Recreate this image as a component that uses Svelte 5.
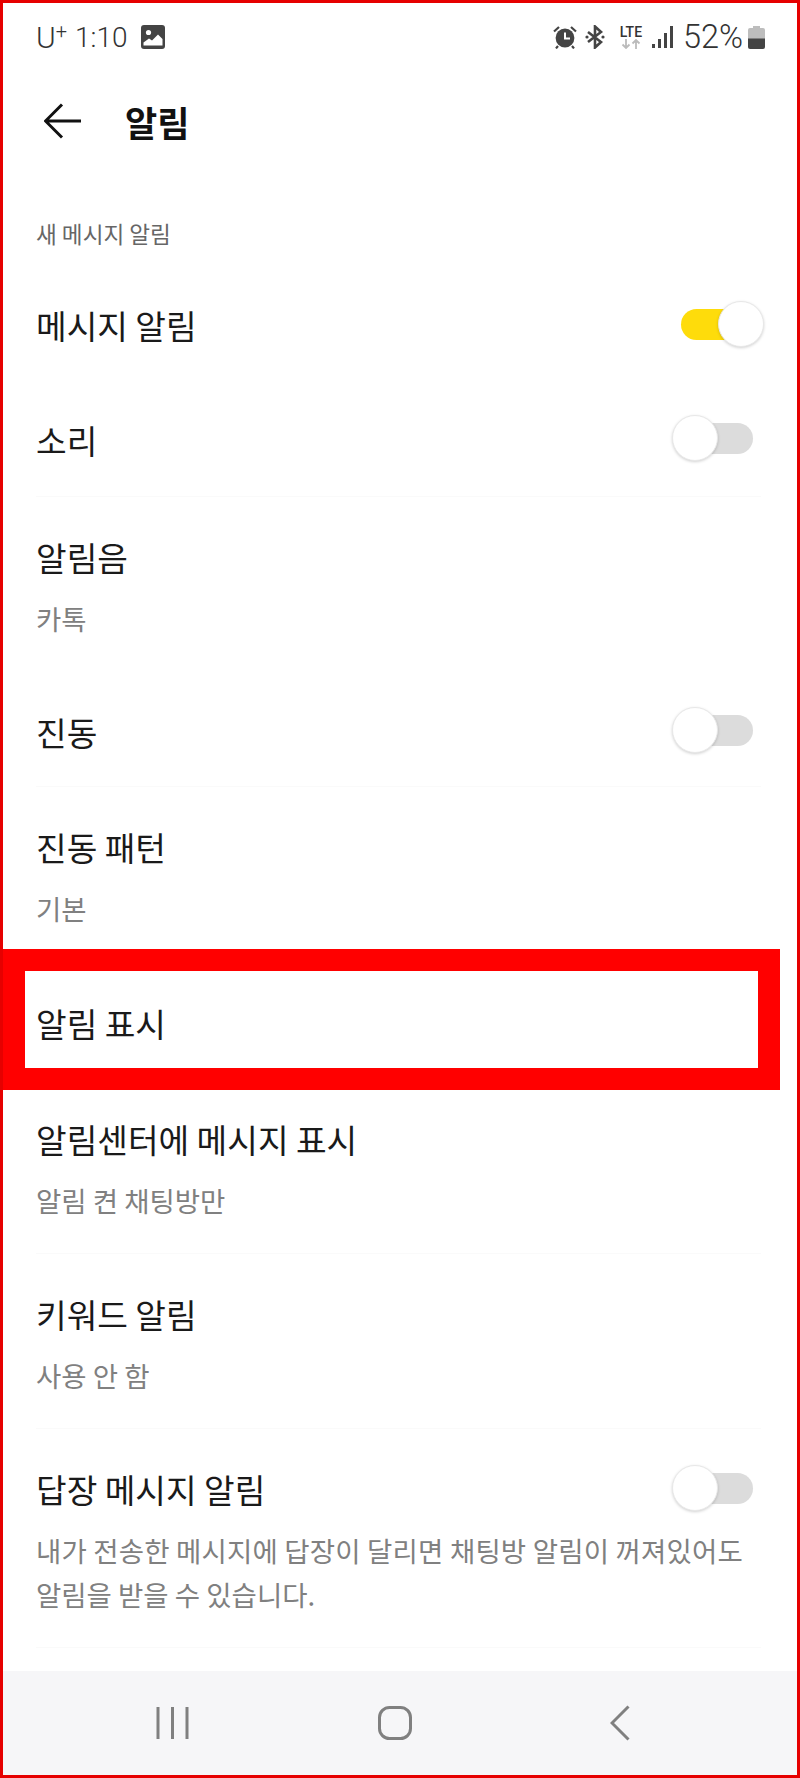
<script>
    let rows = [
        { kind: "toggle", title: "메시지 알림", on: true, h: 116 },
        { kind: "toggle", title: "소리", on: false, h: 114, line: true },
        { kind: "double", title: "알림음", sub: "카톡", h: 180 },
        { kind: "toggle", title: "진동", on: false, h: 110, line: true },
        { kind: "double", title: "진동 패턴", sub: "기본", h: 180 },
        { kind: "plain", title: "알림 표시", h: 112 },
        { kind: "double", title: "알림센터에 메시지 표시", sub: "알림 켠 채팅방만", h: 175, line: true },
        { kind: "double", title: "키워드 알림", sub: "사용 안 함", h: 175, line: true },
    ];
</script>

<div class="screen">
    <div class="status">
        <div class="status-left">
            <span class="carrier">U<sup>+</sup></span>
            <span>1:10</span>
            <svg class="pic" viewBox="0 0 24 24" width="24" height="24">
                <rect width="24" height="24" rx="3" fill="#444" />
                <circle cx="7.5" cy="7.5" r="2.6" fill="#fff" />
                <path d="M2.5 20.5v-3l5.5-4 3 2 6-6 4.5 4.5v6.5z" fill="#fff" />
            </svg>
        </div>
        <div class="status-right">
            <svg viewBox="0 0 24 24" width="24" height="24" fill="#444">
                <circle cx="12" cy="13" r="9.4" />
                <path d="M12 7.5v6h5" fill="none" stroke="#fff" stroke-width="2" />
                <path d="M1 6.5 6 2M23 6.5 18 2M5 21l-2 2.4M19 21l2 2.4" fill="none" stroke="#444" stroke-width="2.2" />
            </svg>
            <svg class="bt" viewBox="0 0 20 24" width="20" height="24">
                <path d="M3 7l13 10-6 5.500V1.500L16 7 3 17" fill="none" stroke="#444" stroke-width="2.600" />
                <circle cx="2" cy="12" r="1.600" fill="#444" />
                <circle cx="18" cy="12" r="1.600" fill="#444" />
            </svg>
            <div class="lte">
                <span>LTE</span>
                <svg viewBox="0 0 24 10" width="24" height="10">
                    <path d="M7 0v9M3.500 5.500 7 9l3.500-3.500M17 10V1M13.500 4.500 17 1l3.500 3.500" fill="none" stroke="#bbb" stroke-width="1.800" />
                </svg>
            </div>
            <svg viewBox="0 0 21 22" width="21" height="22" fill="#444">
                <rect x="0" y="18" width="3" height="4" />
                <rect x="6" y="13" width="3" height="9" />
                <rect x="12" y="7" width="3" height="15" />
                <rect x="18" y="0" width="3" height="22" />
            </svg>
            <span class="pct">52%</span>
            <svg class="batt" viewBox="0 0 17 23" width="17" height="23">
                <path d="M5 0h7v2h3a2 2 0 0 1 2 2v10H0V4a2 2 0 0 1 2-2h3z" fill="#bdbdbd" />
                <path d="M0 12.500h17V21a2 2 0 0 1-2 2H2a2 2 0 0 1-2-2z" fill="#444" />
            </svg>
        </div>
    </div>

    <div class="header">
        <svg viewBox="0 0 38 36" width="38" height="36">
            <path d="M37 18H2M18 1.500 1.500 18 18 34.500" fill="none" stroke="#111" stroke-width="3" />
        </svg>
        <span class="page-title">알림</span>
    </div>

    <div class="section">새 메시지 알림</div>

    {#each rows as row}
        <div class="row {row.kind}" class:line={row.line} style="height: {row.h}px">
            <div class="title">{row.title}</div>
            {#if row.kind === "double"}
                <div class="sub">{row.sub}</div>
            {/if}
            {#if row.kind === "toggle"}
                <div class="switch" class:on={row.on}><i></i></div>
            {/if}
        </div>
    {/each}

    <div class="reply">
        <div class="reply-top">
            <div class="title">답장 메시지 알림</div>
            <div class="switch"><i></i></div>
        </div>
        <div class="desc"><span class="wide">내가 전송한 메시지에 답장이 달리면 채팅방 알림이 꺼져있어도</span><br />알림을 받을 수 있습니다.</div>
    </div>

    <div class="nav">
        <svg viewBox="0 0 33 34" width="33" height="34">
            <path d="M2 1v32M16.500 1v32M31 1v32" stroke="#808080" stroke-width="3" fill="none" />
        </svg>
        <svg class="home" viewBox="0 0 34 34" width="34" height="34">
            <rect x="1.500" y="1.500" width="31" height="31" rx="10" fill="none" stroke="#808080" stroke-width="3" />
        </svg>
        <svg class="back" viewBox="0 0 20 36" width="20" height="36">
            <path d="M18.500 1.500 2 18l16.500 16.500" fill="none" stroke="#808080" stroke-width="3" />
        </svg>
    </div>

    <div class="highlight"></div>
</div>

<style>
    :global(body) {
        margin: 0;
        background: #fff;
    }

    .screen {
        position: relative;
        width: 800px;
        height: 1778px;
        box-sizing: border-box;
        border: 3px solid #e60000;
        background: #fff;
        display: flex;
        flex-direction: column;
        overflow: hidden;
        font-family: "Noto Sans CJK KR", "Noto Sans", sans-serif;
        color: #1a1a1a;
    }

    .status {
        height: 68px;
        flex: none;
        display: flex;
        justify-content: space-between;
        align-items: center;
        padding: 0 32px 0 33px;
        font-family: Roboto, sans-serif;
        font-size: 28px;
        font-weight: 300;
        color: #333;
    }

    .status-left {
        display: flex;
        align-items: center;
    }

    .carrier {
        margin-right: 8px;
        font-size: 30px;
    }

    .carrier sup {
        font-size: 20px;
        line-height: 0;
        vertical-align: 10px;
    }

    .pic {
        margin-left: 13px;
    }

    .status-right {
        display: flex;
        align-items: center;
    }

    .bt {
        margin-left: 8px;
    }

    .lte {
        margin: 0 9px 0 14px;
        display: flex;
        flex-direction: column;
        align-items: center;
        font-size: 14px;
        font-weight: 500;
        line-height: 14px;
    }

    .lte svg {
        display: block;
    }

    .pct {
        margin: 0 5px 0 10px;
        font-size: 32.500px;
    }

    .header {
        height: 100px;
        flex: none;
        display: flex;
        align-items: center;
        padding-left: 41px;
    }

    .page-title {
        margin-left: 43px;
        font-size: 35px;
        font-weight: 700;
        color: #111;
    }

    .section {
        height: 36px;
        flex: none;
        margin: 45px 0 0;
        padding-bottom: 15px;
        padding-left: 33px;
        font-size: 22.600px;
        line-height: 36px;
        color: #666;
    }

    .row {
        flex: none;
        box-sizing: border-box;
        margin: 0 36px 0 33px;
    }

    .row.toggle,
    .row.plain {
        display: flex;
        align-items: center;
        justify-content: space-between;
    }

    .row.line {
        border-bottom: 1px solid #fafafa;
    }

    .row.double {
        padding-top: 38px;
    }

    .title {
        font-size: 33.300px;
        line-height: 44px;
    }

    .sub {
        margin-top: 21px;
        font-size: 27.500px;
        line-height: 36px;
        color: #808080;
    }

    .switch {
        position: relative;
        width: 72px;
        height: 31px;
        margin-right: 8px;
        border-radius: 16px;
        background: #dcdcdc;
        transform: translateY(-1px);
    }

    .switch.on {
        background: #fedc0b;
    }

    .switch i {
        position: absolute;
        top: -8px;
        left: -9px;
        width: 46px;
        height: 46px;
        box-sizing: border-box;
        border-radius: 50%;
        background: #fff;
        border: 1px solid #e8e8e8;
        box-shadow: 0 1px 3px rgba(0, 0, 0, 0.18);
    }

    .switch.on i {
        left: 37px;
    }

    .reply {
        flex: none;
        height: 219px;
        margin: 0 36px 0 33px;
        box-sizing: border-box;
        padding-top: 38px;
        border-bottom: 1px solid #fafafa;
    }

    .reply-top {
        display: flex;
        align-items: center;
        justify-content: space-between;
    }

    .desc {
        margin-top: 17px;
        font-size: 27.500px;
        line-height: 44px;
        white-space: nowrap;
        color: #808080;
    }

    .wide {
        letter-spacing: 0.180px;
    }

    .nav {
        margin-top: auto;
        height: 104px;
        flex: none;
        box-sizing: border-box;
        background: #f6f6f8;
        display: flex;
        align-items: center;
        padding-left: 153px;
        gap: 189px;
    }

    .back {
        margin-left: 9px;
    }

    .highlight {
        position: absolute;
        left: 0;
        top: 946px;
        width: 777px;
        height: 141px;
        box-sizing: border-box;
        border: 22px solid #ff0000;
    }
</style>
